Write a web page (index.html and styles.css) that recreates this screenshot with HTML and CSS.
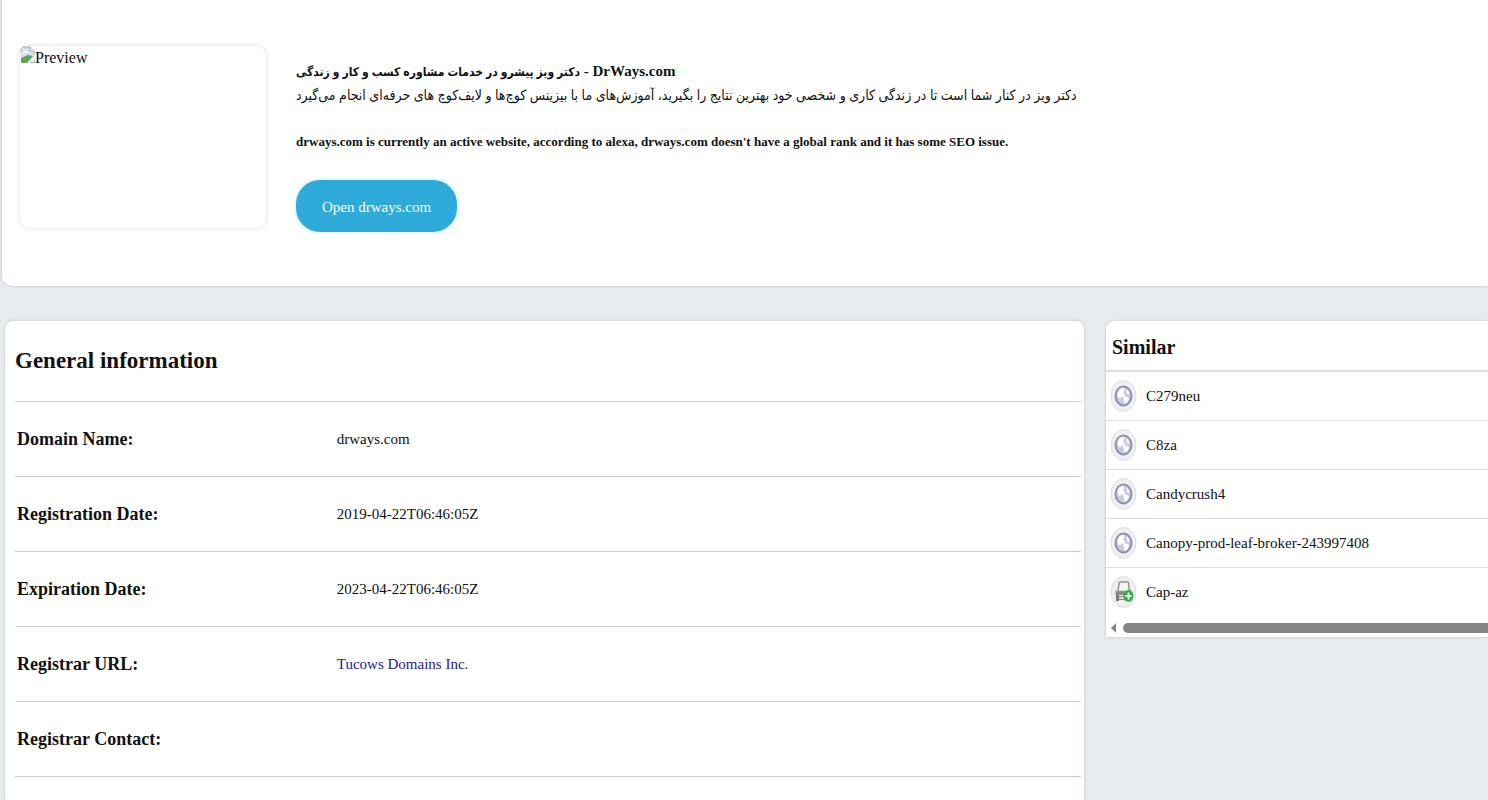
FILE: index.html
```html
<!DOCTYPE html>
<html lang="en">
  <head>
    <meta charset="utf-8">
    <title>drways.com</title>
    <meta name="viewport" content="width=device-width, initial-scale=1">
    <link rel="stylesheet" href="styles.css">
  </head>
  <body>
    <svg class="sprite" aria-hidden="true">
      <symbol id="globe" viewBox="0 0 28 34">
        <ellipse cx="13.5" cy="17" rx="12.5" ry="15.5" fill="#f0f0f3" stroke="#dedee2"/>
        <ellipse cx="13.5" cy="17" rx="8" ry="9.5" fill="#c9cbe0" stroke="#8e90b6" stroke-width="2"/>
        <path d="M7.5 14l2-4 4-1.5 1 3-1.500 1.500 2 3-1 2-2.500-.5-1.500 2-2-2z" fill="#fff"/>
        <path d="M13 18l3.500-.5 2.500 2-1.500 3.500-3 2-.5-3.500z" fill="#fff"/>
        <path d="M16.500 10l2.500 3 .5 3-2.500-1.500z" fill="#fff"/>
      </symbol>
      <symbol id="cart" viewBox="0 0 28 34">
        <ellipse cx="13.5" cy="17" rx="12.5" ry="15.5" fill="#efefef" stroke="#dedede"/>
        <path d="M9 8q0-1 1-1h7.500q1 0 1 1l1 8.500h-11.500z" fill="#f3f3f3" stroke="#929292" stroke-width="1.5"/>
        <path d="M5.500 15l2 2h12l2-2v5h-16z" fill="#8a8a8a"/>
        <path d="M8 21.500h9v3h-9z" fill="#ddd" stroke="#888"/>
        <path d="M6 20h3v6h-3z" fill="#777"/>
        <ellipse cx="18.5" cy="21" rx="5" ry="6" fill="#35ad45"/>
        <path d="M18.500 17.500v7M15.500 21h6" stroke="#e4ffe4" stroke-width="1.8"/>
      </symbol>
    </svg>
    <section class="card site">
      <div class="preview">
        <svg class="broken" viewBox="0 0 15 17" aria-hidden="true">
          <path d="M1 3l2-2h7l4 4v11h-13z" fill="#d3e4f5"/>
          <path d="M3 7c0-3 5-3 5 0z" fill="#fff"/>
          <path d="M1 17v-5l7-3 5 1-6 7z" fill="#5fa458"/>
          <path d="M1 6v-3l2-2h7l4 4v4" fill="none" stroke="#aaa"/>
          <path d="M10 1v4h4" fill="#fff" stroke="#aaa"/>
          <path d="M9 17l6-7v7z" fill="#fff"/>
          <path d="M10 16.5h4.500v-3" fill="none" stroke="#aaa"/>
        </svg>
        <span>Preview</span>
      </div>
      <div class="about">
        <h1 class="site-title"><span class="fa" lang="fa">دکتر ویز پیشرو در خدمات مشاوره کسب و کار و زندگی</span> - DrWays.com</h1>
        <p class="description" lang="fa" dir="rtl">دکتر ویز در کنار شما است تا در زندگی کاری و شخصی خود بهترین نتایج را بگیرید، آموزش‌های ما با بیزینس کوچ‌ها و لایف‌کوچ های حرفه‌ای انجام می‌گیرد</p>
        <p class="status">drways.com is currently an active website, according to alexa, drways.com doesn't have a global rank and it has some SEO issue.</p>
        <a class="open" href="#">Open drways.com</a>
      </div>
    </section>
    <div class="columns">
      <main class="card general">
        <h2 class="general-title">General information</h2>
        <table class="info">
          <tr><th scope="row">Domain Name:</th><td>drways.com</td></tr>
          <tr><th scope="row">Registration Date:</th><td>2019-04-22T06:46:05Z</td></tr>
          <tr><th scope="row">Expiration Date:</th><td>2023-04-22T06:46:05Z</td></tr>
          <tr><th scope="row">Registrar URL:</th><td><a href="#">Tucows Domains Inc.</a></td></tr>
          <tr><th scope="row">Registrar Contact:</th><td></td></tr>
        </table>
      </main>
      <aside class="card similar">
        <h3 class="similar-title">Similar</h3>
        <ul class="list">
          <li><a href="#"><svg class="icon" aria-hidden="true"><use href="#globe"/></svg>C279neu</a></li>
          <li><a href="#"><svg class="icon" aria-hidden="true"><use href="#globe"/></svg>C8za</a></li>
          <li><a href="#"><svg class="icon" aria-hidden="true"><use href="#globe"/></svg>Candycrush4</a></li>
          <li><a href="#"><svg class="icon" aria-hidden="true"><use href="#globe"/></svg>Canopy-prod-leaf-broker-243997408</a></li>
          <li><a href="#"><svg class="icon" aria-hidden="true"><use href="#cart"/></svg>Cap-az</a></li>
        </ul>
        <div class="scrollbar">
          <svg class="arrow" viewBox="0 0 6 10" aria-hidden="true"><path d="M5 0v10l-5-5z" fill="#858585"/></svg>
          <div class="thumb"></div>
        </div>
      </aside>
    </div>
  </body>
</html>
```

FILE: styles.css
```css
* { box-sizing: border-box }

body {
  display: flex;
  flex-direction: column;
  margin: 0;
  padding: 0 0 0 2px;
  min-height: 100vh;
  overflow-x: hidden;
  background: #e8ebf0;
  color: #111;
  font-family: "Liberation Serif", "DejaVu Sans Condensed", "DejaVu Sans", serif;
  font-size: 15px;
}

a { color: inherit; text-decoration: none }
h1, h2, h3, p, ul { margin: 0; padding: 0 }

.sprite { display: none }

.card {
  background: #fff;
  box-shadow: 0 0 3px rgba(0, 0, 0, .2);
}

/* site summary */
.site {
  display: flex;
  gap: 30px;
  padding: 46px 18px 54px;
  border-radius: 0 0 0 10px;
}

.preview {
  display: flex;
  flex: none;
  align-items: flex-start;
  width: 246px;
  height: 182px;
  border-radius: 10px;
  box-shadow: 0 0 5px rgba(0, 0, 0, .15);
  font-size: 16px;
  line-height: 24px;
}

.broken { width: 15px; height: 17px }

.about { padding-top: 13px }

.site-title {
  font-size: 15px;
  line-height: 24px;
}

.fa { font-size: 12px }

.description {
  font-size: 14px;
  line-height: 24px;
  text-align: left;
}

.status {
  margin-top: 22px;
  font-size: 13px;
  font-weight: bold;
  line-height: 24px;
}

.open {
  display: inline-block;
  margin-top: 26px;
  padding: 2px 26px 0;
  border-radius: 24px;
  background: #2fabd9;
  box-shadow: 0 0 4px #b5ecfb;
  color: #fff;
  line-height: 50px;
}

/* details */
.columns {
  display: grid;
  flex: 1;
  grid-template-columns: 1079fr 382fr;
  gap: 22px;
  margin-top: 35px;
  padding-left: 3px;
}

.general {
  padding: 0 3px 0 10px;
  border-radius: 8px 8px 0 0;
}

.general-title {
  font-size: 23px;
  line-height: 80px;
}

.info {
  width: 100%;
  border-collapse: collapse;
  table-layout: fixed;
}

.info th, .info td {
  height: 75px;
  padding: 0 2px;
  border-top: 1px solid #ccc;
  border-bottom: 1px solid #ccc;
  text-align: left;
}

.info th {
  width: 30%;
  font-size: 18px;
}

.info a { color: #22228e }

.similar {
  align-self: start;
  min-width: 0;
  overflow: hidden;
  border-radius: 8px 0 0 0;
}

.similar-title {
  padding: 4px 6px 0;
  border-bottom: 2px solid #ddd;
  font-size: 20px;
  line-height: 45px;
}

.list { list-style: none }

.list a {
  display: flex;
  align-items: center;
  gap: 8px;
  height: 48px;
  padding-left: 4px;
}

.list li + li { border-top: 1px solid #ddd }

.icon { width: 28px; height: 34px }

.scrollbar {
  display: flex;
  align-items: center;
  gap: 6px;
  height: 21px;
  padding: 3px 0 0 5px;
}

.arrow { width: 6px; height: 10px }

.thumb {
  flex: 1;
  height: 10px;
  border-radius: 5px 0 0 5px;
  background: #858585;
}
```
